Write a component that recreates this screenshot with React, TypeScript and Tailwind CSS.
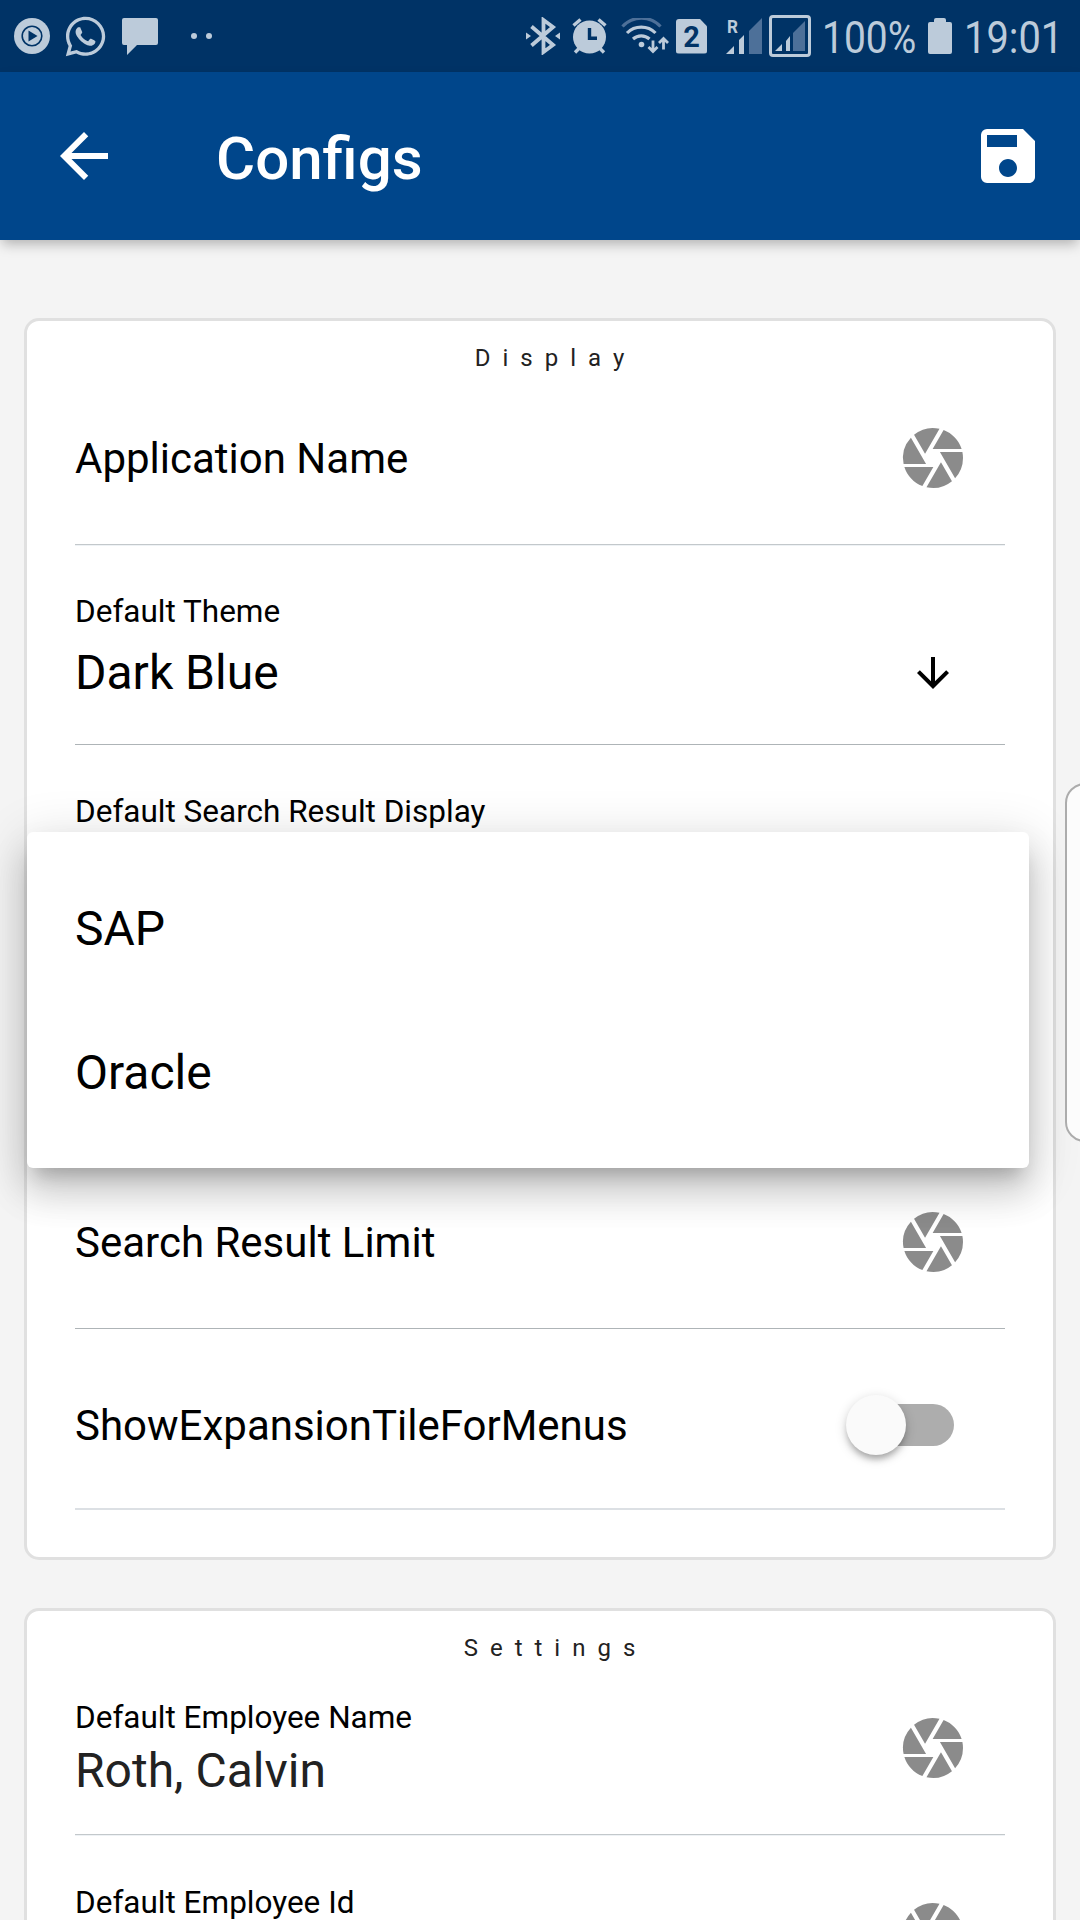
import type { ReactNode } from "react";
import { MdArrowBack, MdArrowDownward, MdCamera, MdSave } from "react-icons/md";
import { FaWhatsapp } from "react-icons/fa";

function StatusBar() {
  return (
    <div className="flex h-[72px] items-center bg-[#003366] pl-[14px] text-[#bccbda]">
      <svg className="h-9 w-9" viewBox="0 0 36 36">
        <circle cx="18" cy="18" r="18" fill="#bccbda" />
        <circle cx="18" cy="18" r="9.8" fill="none" stroke="#003366" strokeWidth="1.6" />
        <path d="M14.5 12.5v11l9-5.5z" fill="#003366" />
      </svg>
      <FaWhatsapp className="ml-[13px] h-[45px] w-[45px]" />
      <svg className="ml-[14px] h-[37px] w-9" viewBox="0 0 36 37" fill="currentColor">
        <path d="M2 0h32a2 2 0 0 1 2 2v23a2 2 0 0 1-2 2H15L5 37V27H2a2 2 0 0 1-2-2V2a2 2 0 0 1 2-2z" />
      </svg>
      <div className="ml-[33px] flex gap-[9px]">
        <div className="h-1.5 w-1.5 rounded-full bg-[#bccbda]" />
        <div className="h-1.5 w-1.5 rounded-full bg-[#bccbda]" />
      </div>
      <svg className="ml-[314px] h-[38px] w-[34px]" viewBox="0 0 34 38" fill="none" stroke="currentColor" strokeWidth="3.8">
        <path d="M5.500 9.500L27 28l-9.500 7V3L27 10 5.500 28.500" />
        <path d="M0 15.500l5 3.500-5 3.500zM34 15.500l-5 3.500 5 3.500z" fill="currentColor" stroke="none" />
      </svg>
      <svg className="ml-3 h-9 w-[35px]" viewBox="0 0 35 36">
        <circle cx="17.500" cy="19" r="16.500" fill="currentColor" />
        <path d="M1.500 7.500l7-6M33.500 7.500l-7-6M3 34.500l5-5M32 34.500l-5-5" stroke="currentColor" strokeWidth="3.4" />
        <path d="M17.500 10v10.200h7.500" fill="none" stroke="#003366" strokeWidth="3.4" />
      </svg>
      <svg className="ml-[14px] h-9 w-12" viewBox="0 0 48 36" fill="none" stroke="currentColor" strokeWidth="3.2">
        <path d="M1.500 8.500a26 26 0 0 1 38 0" stroke="#4d7099" />
        <path d="M6 15a20 20 0 0 1 28.500 0M12 21a12.500 12.500 0 0 1 16.500 0" />
        <circle cx="20.500" cy="26.500" r="2.800" fill="currentColor" stroke="none" />
        <path d="M32 22.500v11M27.500 29l4.500 4.500 4.500-4.500M42.500 31.500v-11M38 25l4.500-4.500 4.500 4.500" strokeWidth="2.800" />
      </svg>
      <div className="ml-[7px] h-[35px] w-[31px] rounded-[3px] bg-[#bccbda] text-center text-[29px] leading-[36px] font-bold text-[#003366] [clip-path:polygon(0_0,76%_0,100%_22%,100%_100%,0_100%)]">
        2
      </div>
      <div className="relative ml-[19px] h-9 w-9">
        <span className="absolute top-0 left-[1px] origin-left scale-x-90 text-[19px] leading-[18px] font-bold">R</span>
        <svg className="h-9 w-9" viewBox="0 0 36 36" fill="currentColor">
          <path d="M0 36l8-8v8zM13 22l5-5v19h-5z" />
          <path d="M23 13L36 0v36H23z" fill="#4d7099" />
        </svg>
      </div>
      <div className="ml-[7px] flex h-[42px] w-[42px] items-center justify-center rounded-[4px] border-3 border-[#bccbda]">
        <svg className="h-[30px] w-[30px]" viewBox="0 0 30 30" fill="currentColor">
          <path d="M0 30l7-7v7zM11 20l4-5v15h-4z" />
          <path d="M18 12L30 0v30H18z" fill="#4d7099" />
        </svg>
      </div>
      <span className="ml-[11px] w-[96px] origin-left scale-x-[0.865] pt-[3px] text-[45px] leading-[70px]">100%</span>
      <svg className="ml-[10px] h-9 w-6 shrink-0" viewBox="0 0 24 36" fill="currentColor">
        <path d="M8 0h8a2 2 0 0 1 2 2v2h4a2 2 0 0 1 2 2v28a2 2 0 0 1-2 2H2a2 2 0 0 1-2-2V6a2 2 0 0 1 2-2h4V2a2 2 0 0 1 2-2z" />
      </svg>
      <span className="ml-[12px] origin-left scale-x-[0.885] pt-[3px] text-[45px] leading-[70px]">19:01</span>
    </div>
  );
}

function AppBar() {
  return (
    <div className="relative flex h-[168px] items-center bg-[#00468b] pr-9 pl-12 text-white shadow-[0_6px_12px_-2px_rgba(0,0,0,0.28)]">
      <MdArrowBack className="h-[72px] w-[72px]" />
      <h1 className="ml-24 grow pt-1.5 text-[60px] leading-[72px] font-medium">Configs</h1>
      <MdSave className="h-[72px] w-[72px]" />
    </div>
  );
}

function Card({ title, children }: { title: string; children: ReactNode }) {
  return (
    <section className="rounded-[15px] border-3 border-[#e0e0e0] bg-white px-12">
      <h2 className="h-[51px] pt-[23px] pl-[31px] text-center text-[24px] leading-[29px] tracking-[12px] text-[#222]">
        {title}
      </h2>
      {children}
    </section>
  );
}

function Line() {
  return <div className="h-0.5 border-t border-[#c3c8cb] bg-[#eef2f5]" />;
}

function Aperture() {
  return <MdCamera className="mr-9 h-[72px] w-[72px] shrink-0 text-[#8b8b8b]" />;
}

function Label({ children }: { children: ReactNode }) {
  return <div className="h-[38px] text-[31.5px] leading-[40px]">{children}</div>;
}

function PlainField({ name }: { name: string }) {
  return (
    <div className="flex h-[172px] items-center justify-between text-[42px]">
      <span>{name}</span>
      <Aperture />
    </div>
  );
}

function ValueField({ label, value }: { label: string; value?: string }) {
  return (
    <div className="flex h-[172px] items-center justify-between">
      <div className="self-start pt-9">
        <Label>{label}</Label>
        <div className="pt-[11px] text-[48px] leading-[48px] text-[#222]">{value}</div>
      </div>
      <Aperture />
    </div>
  );
}

function Menu() {
  return (
    <div className="absolute top-[832px] left-[27px] w-[1002px] rounded-[6px] bg-white py-6 shadow-[0_15px_17px_-9px_rgba(0,0,0,0.2),0_24px_36px_3px_rgba(0,0,0,0.14),0_9px_50px_6px_rgba(0,0,0,0.12)]">
      {["SAP", "Oracle"].map((item) => (
        <div key={item} className="flex h-36 items-center px-12 pt-0.5 text-[48px]">
          {item}
        </div>
      ))}
    </div>
  );
}

export default function App() {
  return (
    <div className="relative h-[1920px] w-[1080px] overflow-hidden bg-[#f4f4f4] font-['Roboto',sans-serif] text-black">
      <StatusBar />
      <AppBar />
      <main className="flex flex-col gap-12 px-6 pt-[78px]">
        <Card title="Display">
          <PlainField name="Application Name" />
          <Line />
          <div className="h-[198px] pt-[46px]">
            <Label>Default Theme</Label>
            <div className="mt-[13px] flex items-center justify-between text-[48px] leading-[60px]">
              <span>Dark Blue</span>
              <MdArrowDownward className="mr-12 h-12 w-12" />
            </div>
          </div>
          <div className="h-px bg-[#aeb4b7]" />
          <div className="h-[411px] pt-[47px]">
            <Label>Default Search Result Display</Label>
          </div>
          <PlainField name="Search Result Limit" />
          <div className="h-px bg-[#aeb4b7]" />
          <div className="flex h-[179px] items-center justify-between pt-[13px] text-[42px]">
            <span>ShowExpansionTileForMenus</span>
            <div className="mr-[51px] mb-px flex h-[42px] w-[99px] items-center rounded-full bg-[#adadad]">
              <div className="-ml-[9px] h-[60px] w-[60px] rounded-full bg-[#fafafa] shadow-[0_6px_6px_-2px_rgba(0,0,0,0.25),0_3px_12px_rgba(0,0,0,0.18)]" />
            </div>
          </div>
          <div className="mb-[47px] h-0.5 bg-[#dce0e4]" />
        </Card>
        <Card title="Settings">
          <ValueField label="Default Employee Name" value="Roth, Calvin" />
          <Line />
          <div className="h-[11px]" />
          <ValueField label="Default Employee Id" />
        </Card>
      </main>
      <Menu />
      <div className="absolute top-[783px] left-[1065px] h-[359px] w-10 rounded-[20px] border-2 border-[#acacac] bg-[#fcfcfc]" />
    </div>
  );
}
